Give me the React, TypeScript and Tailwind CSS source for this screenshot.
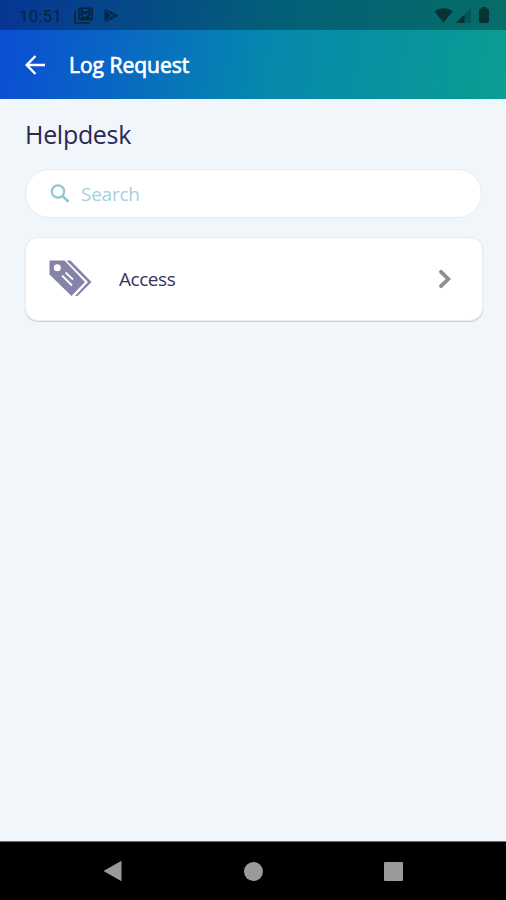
import type { ReactNode } from 'react';

const StatusBar = () => (
  <div className="flex h-[30px] items-center bg-black/30 pl-[19px] pr-[17px] text-[#02263f]">
    <span className="w-[43px] whitespace-nowrap font-[Roboto] text-[17px] leading-none tracking-[0.1px] pt-[2px]">10:51</span>

    {/* Gallery notification */}
    <svg className="ml-[12px]" width="20" height="17" viewBox="0 0 20 17" fill="none" stroke="currentColor">
      <path d="M1 4v12h15" strokeWidth="1.600" />
      <rect x="4.800" y="1.300" width="13.400" height="11.400" rx="1" strokeWidth="1.600" />
      <path d="M7.500 9V3.500l4 3 4-3V9" strokeWidth="2.200" />
      <path d="M5 12.500l3.500-3.500 2.500 1.500 3-2.500 4 4.500z" fill="currentColor" strokeWidth="0.500" />
    </svg>

    {/* Play store notification */}
    <svg className="ml-[10px]" width="15" height="15" viewBox="0 0 15 15" fill="currentColor">
      <path d="M0.500 1v13L6.600 7.500z" />
      <path d="M1.400 0.800l6.400 6 2.400-1.700z" />
      <path d="M1.400 14.200l6.400-6 2.400 1.700z" />
      <path d="M8.400 7.500l2.500-2.200 3.600 2.200-3.600 2.200z" />
    </svg>

    <div className="ml-auto flex items-center text-[#043434]">
      <svg width="19" height="15" viewBox="0 0 19 15" fill="currentColor">
        <path d="M0.300 3.200C5.500-0.800 13.500-0.800 18.700 3.200L9.500 14.700z" />
      </svg>
      <svg className="ml-[3px]" width="15" height="15" viewBox="0 0 15 15" fill="currentColor">
        <path d="M0 15L15 0v15z" opacity="0.35" />
        <path d="M0 15L8.500 6.500V15z" />
      </svg>
      <svg className="ml-[8px]" width="10" height="16" viewBox="0 0 10 16" fill="currentColor">
        <path d="M3 0h4v1.600h1.500q1.500 0 1.500 1.500v11.400q0 1.500-1.500 1.500h-7q-1.500 0-1.500-1.500V3.100q0-1.500 1.500-1.500H3z" />
      </svg>
    </div>
  </div>
);

const TagsIcon = () => (
  <svg className="-mt-px" width="43" height="37" viewBox="0 0 43 37">
    <path d="M0.500 0.500H15.500L36 22 22.500 36 0.500 14.500z" fill="#8583a8" />
    <path d="M17.500 0.500H21.500L42.500 22 28.500 36H26L39 22z" fill="#8583a8" />
    <circle cx="8.300" cy="7.800" r="3.500" fill="#fff" />
    <path d="M16.500 12.500l7.500 7M13 15.500l10 10" stroke="#fff" strokeWidth="1.800" />
  </svg>
);

const RequestCard = ({ icon, label }: { icon: ReactNode; label: string }) => (
  <button className="mt-[19px] flex h-[84px] w-full items-center rounded-[13px] border border-[#e9ecf1] bg-white pl-[23px] pr-[30px] shadow-[0_1px_1px_#cdd1d5]">
    {icon}
    <span className="ml-[27px] text-[19px] tracking-[-0.45px] text-[#37345a]">{label}</span>
    <svg className="ml-auto" width="14" height="20" viewBox="0 0 14 20" fill="none" stroke="#8e8e8e" strokeWidth="3.800" strokeLinecap="round">
      <path d="M3 2.800L10.300 10 3 17.200" />
    </svg>
  </button>
);

const NavigationBar = () => (
  <nav className="flex h-[59px] items-center border-t border-[#6d7070] bg-black pl-[103px] pr-[103px]">
    <svg width="19" height="22" viewBox="0 0 19 22">
      <path d="M0.500 11L18.500 0.800v20.400z" fill="#9a9a9a" />
    </svg>
    <div className="ml-[122px] size-[19px] rounded-full bg-[#9a9a9a]" />
    <div className="ml-auto size-[19px] rounded-[1px] bg-[#9a9a9a]" />
  </nav>
);

export default function App() {
  return (
    <div className="flex h-[900px] w-[506px] flex-col overflow-hidden bg-[#f0f6fa] font-['Open_Sans',sans-serif]">
      <header className="h-[99px] bg-[linear-gradient(98deg,#0b50d2_3%,#0588ad_53%,#0a9d93_99%)]">
        <StatusBar />
        <div className="flex h-[69px] items-center pl-[25px]">
          <svg width="21" height="20" viewBox="0 0 21 20" fill="none" stroke="#fff" strokeWidth="2.400">
            <path d="M20 10H2M10.500 1L1.700 10l8.800 9" />
          </svg>
          <h1 className="ml-[23px] pt-[2px] text-[21px] text-white [-webkit-text-stroke:0.7px_white]">Log Request</h1>
        </div>
      </header>

      <main className="flex-1 pl-[25px] pr-[23px] pt-[17px]">
        <h2 className="text-[25px] leading-[36px] tracking-[-0.3px] text-[#2c2856]">Helpdesk</h2>
        <div className="mr-px mt-[17px] flex h-[49px] items-center rounded-full border border-[#e7eaf2] bg-white pl-[24px]">
          <svg width="20" height="19" viewBox="0 0 20 19" fill="none" stroke="#94c5dc">
            <circle cx="8" cy="7.500" r="6.200" strokeWidth="2.200" />
            <path d="M12.200 11.800l6.300 6" strokeWidth="2.800" />
          </svg>
          <span className="ml-[11px] pt-[2px] text-[19px] tracking-[-0.25px] text-[#a5cfe2]">Search</span>
        </div>
        <RequestCard icon={<TagsIcon />} label="Access" />
      </main>

      <NavigationBar />
    </div>
  );
}
